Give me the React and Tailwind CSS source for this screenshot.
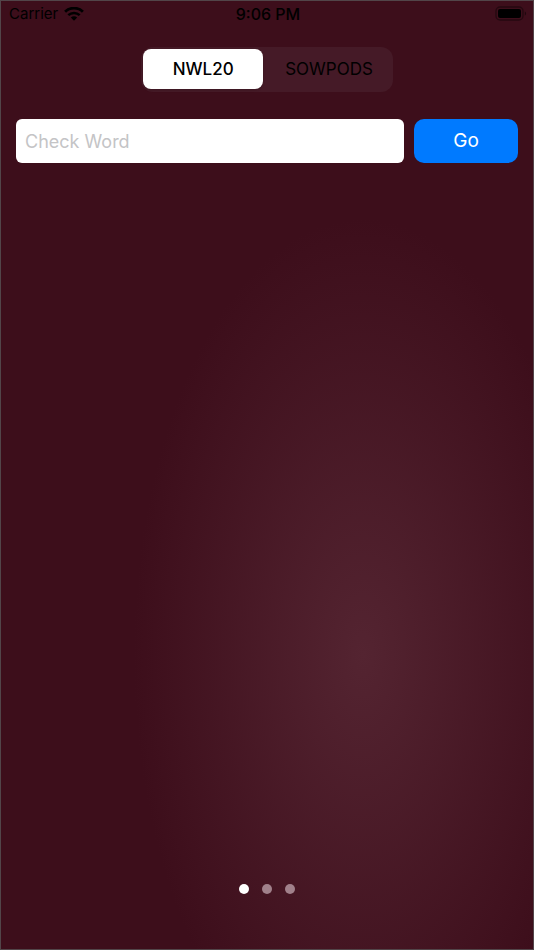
import React, { useState } from 'react';

const dictionaries = ['NWL20', 'SOWPODS'];
const pages = ['Check word', 'Word lists', 'Settings'];

function WifiIcon() {
  return (
    <svg viewBox="0 0 20 14" className="h-[14px] w-5" fill="none" stroke="black" aria-hidden="true">
      <path d="M1.1 4.8C6-.1 14-.1 18.9 4.8" strokeWidth="2.8" />
      <path d="M4.3 8.2C7.5 5.1 12.5 5.1 15.7 8.2" strokeWidth="2.5" />
      <path d="M6.8 10.6C8.6 8.9 11.4 8.9 13.2 10.6L10 13.8Z" fill="black" stroke="none" />
    </svg>
  );
}

function BatteryIcon() {
  return (
    <svg viewBox="0 0 32 16" className="h-4 w-8" aria-hidden="true">
      <rect x="1" y="1" width="27" height="13" rx="4" fill="none" stroke="black" strokeOpacity="0.4" strokeWidth="1.4" />
      <rect x="3" y="3" width="23" height="9" rx="2" fill="black" />
      <path d="M29.8 5.3c1.7.7 1.7 3.7 0 4.4z" fill="black" fillOpacity="0.5" />
    </svg>
  );
}

function StatusBar() {
  return (
    <header className="grid h-[26px] grid-cols-3 items-center pl-2 pr-1.5 leading-6">
      <div className="flex items-center gap-1.5">
        <span className="text-[15px]">Carrier</span>
        <WifiIcon />
      </div>
      <span className="text-center text-base font-medium">9:06 PM</span>
      <div className="flex justify-end">
        <BatteryIcon />
      </div>
    </header>
  );
}

function App() {
  const [dictionary, setDictionary] = useState('NWL20');
  const [word, setWord] = useState('');
  const [page, setPage] = useState(0);

  return (
    <div className="flex min-h-screen flex-col border border-[#524549] bg-[#3d0e1b] bg-[radial-gradient(43%_46%_at_68%_69%,#542431,#3d0e1b)] font-[Inter,sans-serif] text-black">
      <StatusBar />

      <main className="flex flex-1 flex-col px-[15px] pt-5">
        {/* Dictionary switch */}
        <div className="mx-auto flex gap-1 rounded-xl bg-[#451a27] p-0.5 pb-[3px]">
          {dictionaries.map((name) => (
            <button
              key={name}
              type="button"
              aria-pressed={dictionary === name}
              onClick={() => setDictionary(name)}
              className={`h-10 min-w-[120px] rounded-lg px-[18px] text-[17px] leading-6 ${
                dictionary === name ? 'bg-white font-medium shadow-sm' : ''
              }`}
            >
              {name}
            </button>
          ))}
        </div>

        {/* Word form */}
        <form className="mt-[27px] flex gap-2.5" onSubmit={(e) => e.preventDefault()}>
          <input
            type="text"
            value={word}
            onChange={(e) => setWord(e.target.value)}
            placeholder="Check Word"
            aria-label="Check Word"
            autoComplete="off"
            className="h-11 min-w-0 flex-1 rounded-md bg-white px-[9px] text-lg placeholder-[#c4c4c6] focus:outline-none"
          />
          <button type="submit" className="h-11 w-[104px] rounded-[10px] bg-[#007aff] text-[19px] leading-7 text-white">
            Go
          </button>
        </form>
      </main>

      {/* Page dots */}
      <nav className="flex justify-center gap-[13px] pb-[55px]">
        {pages.map((label, idx) => (
          <button
            key={label}
            type="button"
            aria-label={label}
            onClick={() => setPage(idx)}
            className={`h-2.5 w-2.5 rounded-full ${page === idx ? 'bg-white' : 'bg-[#a1818b]'}`}
          />
        ))}
      </nav>
    </div>
  );
}

export default App;
